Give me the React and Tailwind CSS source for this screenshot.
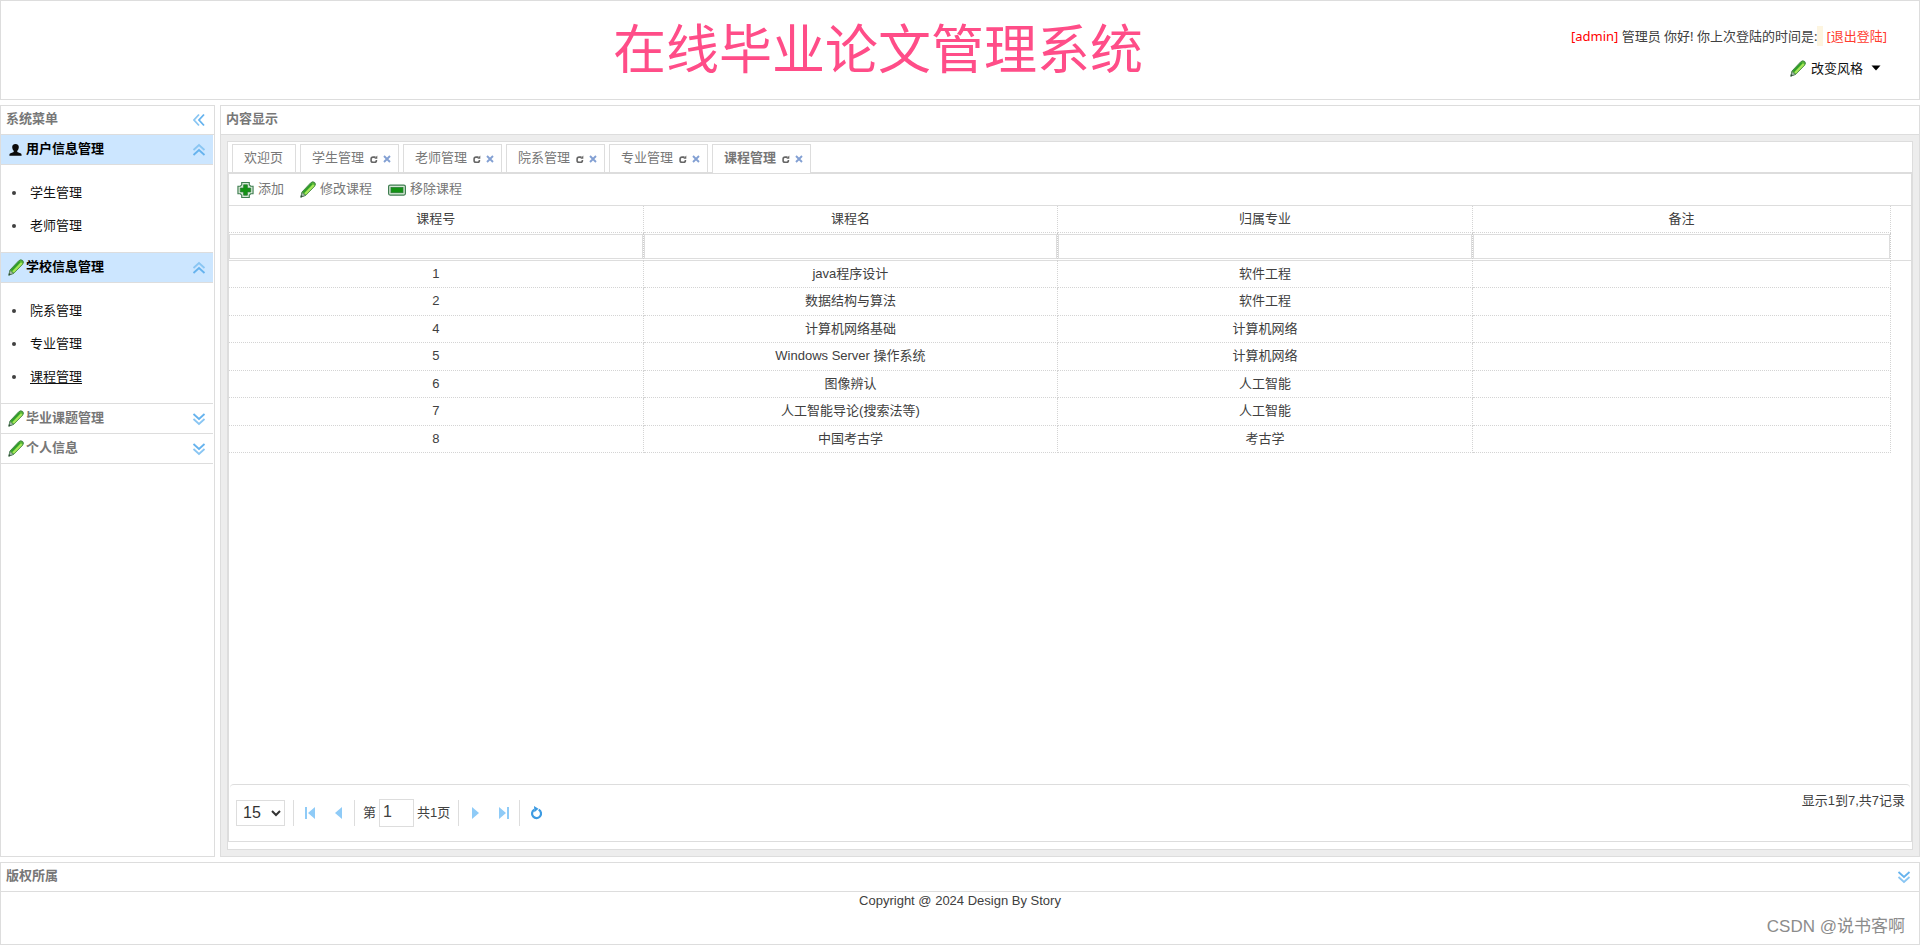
import React from 'react';

const LINE = 'border-[#dddddd]';

function Pencil() {
  return (
    <svg width="16" height="17" viewBox="0 0 16 17" aria-hidden="true" className="shrink-0">
      <path d="M.8 16.200 L2 11 L10.800 1.700 Q12.800 0 14.700 1.500 Q16.200 3.200 14.600 5.200 L5.900 14.200 Z" fill="#56b535" stroke="#3b7d44" strokeWidth=".9" />
      <path d="M3.400 11.400 L11.700 2.700" stroke="#2a9a2a" strokeWidth="1.500" />
      <path d="M5.200 13 L13.800 4" stroke="#a6e85a" strokeWidth="2.200" />
      <path d="M.8 16.200 L2 11.600 L5.400 14.400 Z" fill="#a5bda9" stroke="#56775f" strokeWidth=".6" />
      <path d="M.8 16.200 L1.400 14 L2.800 15.400 Z" fill="#2b4030" />
    </svg>
  );
}

function User() {
  return (
    <svg width="15" height="16" viewBox="0 0 16 16" aria-hidden="true" className="shrink-0">
      <path d="M8 1.500c2.400 0 3.700 1.500 3.500 3.800-.2 1.700-.8 2.800-1.600 3.500v1.400l3.300 1.300c1.100.4 1.300 1 1.300 2.700H1.500c0-1.700.2-2.300 1.300-2.700l3.300-1.300V8.800C5.300 8.100 4.700 7 4.500 5.300 4.300 3 5.600 1.500 8 1.500z" fill="#0a0a0a" />
    </svg>
  );
}

function Plus() {
  return (
    <svg width="17" height="18" viewBox="0 0 18 18" aria-hidden="true">
      <path d="M5 1h8v2.500l1.500 1.500H17v8h-2.500L13 14.500V17H5v-2.500L3.500 13H1V5h2.500L5 3.500z" fill="#d5e8d5" stroke="#3f7d50" strokeWidth="1.200" />
      <path d="M7 3.500h4V7h3.500v4H11v3.500H7V11H3.500V7H7z" fill="#139313" stroke="#2c7a38" strokeWidth=".8" />
    </svg>
  );
}

function Minus() {
  return (
    <svg width="18" height="18" viewBox="0 0 18 18" aria-hidden="true">
      <rect x=".6" y="4.100" width="16.800" height="10" rx="1.500" fill="#d5e8d5" stroke="#3f7d50" strokeWidth="1.200" />
      <rect x="3" y="6.500" width="12" height="5.200" fill="#139313" stroke="#2c7a38" strokeWidth=".8" />
    </svg>
  );
}

function Chevrons({ turn = '' }) {
  return (
    <svg width="14" height="14" viewBox="0 0 14 14" aria-hidden="true" className={turn} fill="none" strokeWidth="1.800">
      <path d="M1.500 7 L7 2 L12.500 7" stroke="#8ac6f3" />
      <path d="M1.500 12 L7 7 L12.500 12" stroke="#66b3ee" />
    </svg>
  );
}

function TabReload() {
  return (
    <svg width="8" height="10" viewBox="0 0 8 10" aria-hidden="true">
      <path d="M5.600 3.100 H3 Q1.100 3.100 1.100 5 V6.400 Q1.100 8.200 3 8.200 H4.600 Q6.400 8.200 6.400 6.400 V6" fill="none" stroke="#666" strokeWidth="1.600" />
      <path d="M4.300 4.800 H7.300 V1.400 Z" fill="#666" />
    </svg>
  );
}

function TabClose() {
  return (
    <svg width="8" height="8" viewBox="0 0 8 8" aria-hidden="true">
      <path d="M1 1 L7 7 M7 1 L1 7" stroke="#83a0d3" strokeWidth="1.900" />
    </svg>
  );
}

function PageArrow({ kind }) {
  const shapes = {
    first: <path d="M1 0h2v12H1zM11 0v12L4 6z" />,
    prev: <path d="M9 0v12L2 6z" />,
    next: <path d="M3 0v12l7-6z" />,
    last: <path d="M1 0v12l7-6zM9 0h2v12H9z" />,
  };
  return (
    <svg width="12" height="12" viewBox="0 0 12 12" aria-hidden="true" fill="#8fcbf7">
      {shapes[kind]}
    </svg>
  );
}

function Reload() {
  return (
    <svg width="13" height="14" viewBox="0 0 13 14" aria-hidden="true">
      <path d="M8.700 3.600 A4.500 4.500 0 1 1 4.200 3.700" fill="none" stroke="#3d9be2" strokeWidth="2.200" />
      <path d="M4 0 L8.500 2.800 L4.400 6.200 Z" fill="#3d9be2" />
    </svg>
  );
}

const menu = [
  { title: '用户信息管理', icon: <User />, items: ['学生管理', '老师管理'] },
  { title: '学校信息管理', icon: <Pencil />, items: ['院系管理', '专业管理', '课程管理'] },
  { title: '毕业课题管理', icon: <Pencil /> },
  { title: '个人信息', icon: <Pencil /> },
];

const tabs = ['欢迎页', '学生管理', '老师管理', '院系管理', '专业管理', '课程管理'];
const columns = ['课程号', '课程名', '归属专业', '备注'];
const rows = [
  ['1', 'java程序设计', '软件工程', ''],
  ['2', '数据结构与算法', '软件工程', ''],
  ['4', '计算机网络基础', '计算机网络', ''],
  ['5', 'Windows Server 操作系统', '计算机网络', ''],
  ['6', '图像辨认', '人工智能', ''],
  ['7', '人工智能导论(搜索法等)', '人工智能', ''],
  ['8', '中国考古学', '考古学', ''],
];

function Header() {
  return (
    <header className={`flex h-[100px] border ${LINE} pl-[186px]`}>
      <h1 className="flex-1 pt-[12px] text-center text-[53px] leading-[76px] text-[#ff4d88]">在线毕业论文管理系统</h1>
      <div className="flex w-[350px] flex-col items-end pt-[25px] pr-[32px] font-['Noto_Sans','Noto_Sans_CJK_SC',sans-serif] whitespace-nowrap">
        <p className="leading-[20px]">
          <span className="text-[#ff0000]">[admin]</span> 管理员 你好! 你上次登陆的时间是:
          <span className="mr-[3px] inline-block h-[20px] w-[6px] bg-[#fdf5e0] align-bottom" />
          <a href="#logout" className="text-[#ff3b2f]">[退出登陆]</a>
        </p>
        <button type="button" className="mt-[12px] mr-[6px] flex items-center leading-[20px] text-[#111111]">
          <Pencil />
          <span className="ml-[5px]">改变风格</span>
          <svg width="10" height="6" viewBox="0 0 10 6" className="ml-[8px]" aria-hidden="true">
            <path d="M.5 .5h9L5 5.500z" fill="#000" />
          </svg>
        </button>
      </div>
    </header>
  );
}

function Sidebar() {
  return (
    <nav className={`flex w-[215px] shrink-0 flex-col border ${LINE}`}>
      <div className={`flex h-[29px] items-center justify-between border-b ${LINE} pr-[8px] pl-[5px]`}>
        <h2 className="pb-[2px] font-bold text-[#777777]">系统菜单</h2>
        <button type="button" aria-label="收起菜单"><Chevrons turn="-rotate-90" /></button>
      </div>
      <div className="pr-px">
        {menu.map((group) => (
          <section key={group.title}>
            <button
              type="button"
              className={`flex h-[30px] w-full items-center border-b ${LINE} pr-[7px] pl-[7px] font-bold ${group.items ? 'bg-[#cce6ff] text-black' : 'text-[#777777]'}`}
            >
              <span className="w-[18px]">{group.icon}</span>
              <span className="flex-1 pb-[2px] text-left">{group.title}</span>
              <Chevrons turn={group.items ? '' : 'rotate-180'} />
            </button>
            {group.items && (
              <ul className={`border-b ${LINE} pt-[11px] pb-[10px]`}>
                {group.items.map((item) => (
                  <li key={item} className="flex h-[33px] items-center pl-[11px]">
                    <span className="mr-[14px] size-[4px] rounded-full bg-[#404040]" />
                    <a href="#menu" className={`text-[#111111] ${item === '课程管理' ? 'underline underline-offset-2' : ''}`}>{item}</a>
                  </li>
                ))}
              </ul>
            )}
          </section>
        ))}
      </div>
    </nav>
  );
}

function Tabs() {
  return (
    <div className={`flex h-[31px] items-end gap-[4px] border-b ${LINE} pl-[4px]`}>
      {tabs.map((tab, i) => (
        <div
          key={tab}
          className={`flex items-center border border-b-0 ${LINE} bg-white pl-[11px] text-[#777777] ${i === 0 ? 'pr-[12px]' : 'pr-[7px]'} ${i === 5 ? '-mb-px h-[29px] font-bold' : 'h-[28px]'}`}
        >
          <button type="button" className="pb-[2px]">{tab}</button>
          {i > 0 && (
            <>
              <button type="button" aria-label={`刷新${tab}`} className="ml-[6px]"><TabReload /></button>
              <button type="button" aria-label={`关闭${tab}`} className="ml-[5px]"><TabClose /></button>
            </>
          )}
        </div>
      ))}
    </div>
  );
}

function Toolbar() {
  const actions = [
    ['添加', <Plus />],
    ['修改课程', <Pencil />],
    ['移除课程', <Minus />],
  ];
  return (
    <div className={`flex h-[32px] items-center gap-[16px] border-b ${LINE} pl-[8px] text-[#777777]`}>
      {actions.map(([label, icon]) => (
        <button key={label} type="button" className="flex items-center gap-[4px]">
          {icon}
          <span className="pb-[2px]">{label}</span>
        </button>
      ))}
    </div>
  );
}

function CourseTable() {
  const cell = 'border-r border-b border-dotted border-[#d4d4d4] p-0 pb-px text-center';
  return (
    <table className="w-full table-fixed border-separate border-spacing-0">
      <colgroup>
        <col className="w-[24.65%]" />
        <col className="w-[24.65%]" />
        <col className="w-[24.65%]" />
        <col />
        <col className="w-[20px]" />
      </colgroup>
      <thead>
        <tr className="h-[27px]">
          {columns.map((c) => (
            <th key={c} scope="col" className={`${cell} font-normal`}>{c}</th>
          ))}
          <td />
        </tr>
        <tr className="h-[28px]">
          {columns.map((c) => (
            <td key={c} className="border-r border-b border-r-[#cccccc] border-b-[#dddddd] [border-right-style:dotted]">
              <input aria-label={`筛选${c}`} className={`block h-[25px] w-full border ${LINE} px-[4px] outline-none`} />
            </td>
          ))}
          <td className={`border-b ${LINE}`} />
        </tr>
      </thead>
      <tbody>
        {rows.map((row) => (
          <tr key={row[0]} className="h-[27px] even:h-[28px]">
            {row.map((value, i) => (
              <td key={columns[i]} className={cell}>{value}</td>
            ))}
            <td />
          </tr>
        ))}
      </tbody>
    </table>
  );
}

function Pager() {
  const rule = 'h-[26px] w-px bg-[#dddddd]';
  return (
    <div className={`mx-px mt-auto flex h-[57px] justify-between rounded-t-[4px] border-t ${LINE} pr-[5px] pl-[6px]`}>
      <div className="flex h-[56px] items-center pb-[1px]">
        <select aria-label="每页记录数" defaultValue="15" className={`h-[26px] w-[49px] border ${LINE} bg-white pl-[2px] text-[16px] leading-[24px] text-[#333333]`}>
          <option>15</option>
        </select>
        <span className={`ml-[8px] ${rule}`} />
        <button type="button" aria-label="首页" className="ml-[10px]"><PageArrow kind="first" /></button>
        <button type="button" aria-label="上一页" className="ml-[17px]"><PageArrow kind="prev" /></button>
        <span className={`ml-[9px] ${rule}`} />
        <label htmlFor="page" className="ml-[8px]">第</label>
        <input id="page" defaultValue="1" className={`mx-[3px] h-[28px] w-[35px] border ${LINE} pb-[2px] pl-[3px] text-[16px] outline-none`} />
        <span>共1页</span>
        <span className={`ml-[8px] ${rule}`} />
        <button type="button" aria-label="下一页" className="ml-[10px]"><PageArrow kind="next" /></button>
        <button type="button" aria-label="末页" className="ml-[17px]"><PageArrow kind="last" /></button>
        <span className={`ml-[9px] ${rule}`} />
        <button type="button" aria-label="刷新" className="ml-[10px]"><Reload /></button>
      </div>
      <p className="pt-[6px] leading-[20px]">显示1到7,共7记录</p>
    </div>
  );
}

export default function App() {
  return (
    <div className="flex min-h-screen flex-col gap-[5px] bg-white font-['Liberation_Sans','Noto_Sans_CJK_SC',sans-serif] text-[13px] leading-[20px] text-[#404040]">
      <Header />
      <div className="flex flex-1 gap-[5px]">
        <Sidebar />
        <main className={`flex min-w-0 flex-1 flex-col border ${LINE}`}>
          <div className={`flex h-[29px] items-center border-b ${LINE} pl-[5px]`}>
            <h2 className="pb-[2px] font-bold text-[#777777]">内容显示</h2>
          </div>
          <div className="flex flex-1 flex-col bg-[#ededed] p-[6px]">
            <div className={`flex flex-1 flex-col border ${LINE} bg-white pb-[7px]`}>
              <Tabs />
              <div className={`flex flex-1 flex-col border ${LINE}`}>
                <Toolbar />
                <CourseTable />
                <Pager />
              </div>
            </div>
          </div>
        </main>
      </div>
      <footer className={`relative h-[83px] border ${LINE}`}>
        <div className={`flex h-[29px] items-center justify-between border-b ${LINE} pr-[8px] pl-[5px]`}>
          <h2 className="pb-[2px] font-bold text-[#777777]">版权所属</h2>
          <button type="button" aria-label="展开"><Chevrons turn="rotate-180" /></button>
        </div>
        <p className="text-center leading-[18px]">Copyright @ 2024 Design By Story</p>
        <span className="absolute right-[14px] bottom-[4px] text-[17px] leading-[26px] text-[#8c8c8c]">CSDN @说书客啊</span>
      </footer>
    </div>
  );
}
